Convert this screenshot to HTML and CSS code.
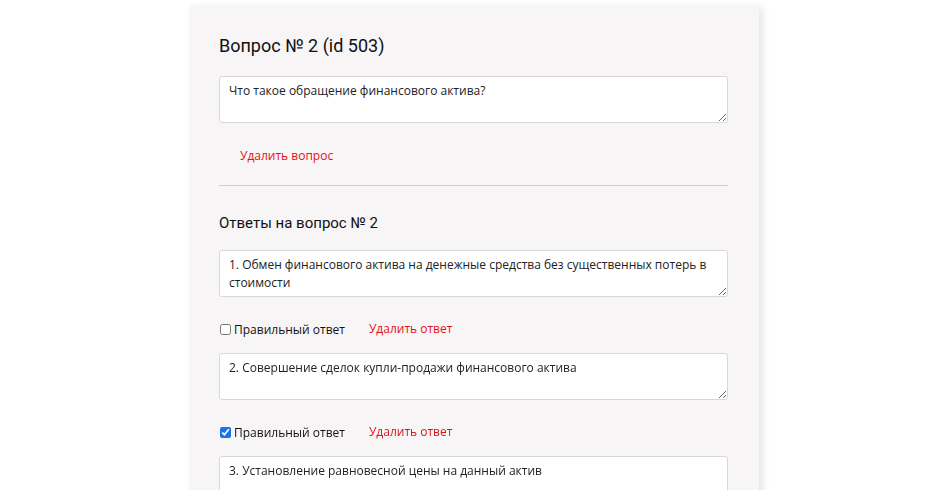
FILE: index.html
```html
<!DOCTYPE html>
<html lang="ru">
<head>
<meta charset="utf-8">
<title>Вопрос № 2</title>
<link rel="stylesheet" href="styles.css">
</head>
<body>
<div class="page">
  <section class="card">
    <h2 class="q-title">Вопрос № 2 (id 503)</h2>
    <textarea class="field">Что такое обращение финансового актива?</textarea>
    <div class="q-actions"><a class="danger" href="#">Удалить вопрос</a></div>
    <hr class="sep">
    <h3 class="a-title">Ответы на вопрос № 2</h3>
    <div class="answer">
      <textarea class="field">1. Обмен финансового актива на денежные средства без существенных потерь в стоимости</textarea>
      <div class="a-row">
        <label class="check"><input type="checkbox"><span>Правильный ответ</span></label>
        <a class="danger" href="#">Удалить ответ</a>
      </div>
    </div>
    <div class="answer">
      <textarea class="field">2. Совершение сделок купли-продажи финансового актива</textarea>
      <div class="a-row">
        <label class="check"><input type="checkbox" checked><span>Правильный ответ</span></label>
        <a class="danger" href="#">Удалить ответ</a>
      </div>
    </div>
    <div class="answer">
      <textarea class="field">3. Установление равновесной цены на данный актив</textarea>
      <div class="a-row">
        <label class="check"><input type="checkbox"><span>Правильный ответ</span></label>
        <a class="danger" href="#">Удалить ответ</a>
      </div>
    </div>
  </section>
</div>
</body>
</html>
```

FILE: styles.css
```css
* { box-sizing: border-box; }
html, body { margin: 0; padding: 0; background: #fff; }
body { font-family: "Open Sans", "Liberation Sans", sans-serif; color: #222; height: 490px; overflow: hidden; }
.page { padding: 5px 0 0 190px; }
.card {
  width: 569px;
  background: #f7f5f5;
  padding: 26px 31px 40px 29px;
  box-shadow: 3px 3px 8px rgba(0,0,0,0.12);
}
.q-title {
  font-family: Roboto, "Liberation Sans", sans-serif;
  font-weight: 400;
  font-size: 18px;
  line-height: 30px;
  margin: 0 0 15px 0;
  color: #111;
}
.field {
  display: block;
  width: 100%;
  height: 47px;
  padding: 5px 9px;
  border: 1px solid #d9d7d7;
  border-radius: 3px;
  background: #fff;
  font-family: "Open Sans", "Liberation Sans", sans-serif;
  font-size: 12px;
  line-height: 18px;
  color: #222;
  resize: vertical;
  margin: 0;
}
.q-actions { padding: 20px 0 0 21px; height: 62px; }
.danger {
  color: #e3101a;
  text-decoration: none;
  font-size: 12px;
  line-height: 18px;
}
.sep { border: 0; border-top: 1px solid #cfcdcd; margin: 0; }
.a-title {
  font-family: Roboto, "Liberation Sans", sans-serif;
  font-weight: 400;
  font-size: 15px;
  line-height: 24px;
  margin: 25px 0 15px 0;
  color: #111;
}
.a-row {
  display: flex;
  align-items: center;
  gap: 24px;
  height: 20px;
  margin: 22px 0 14px 0;
}
.check {
  display: flex;
  align-items: center;
  gap: 3px;
  font-size: 12px;
  color: #111;
}
.check input {
  width: 11px;
  height: 11px;
  margin: 0 0 0 1px;
  accent-color: #1a73e8;
}
```
